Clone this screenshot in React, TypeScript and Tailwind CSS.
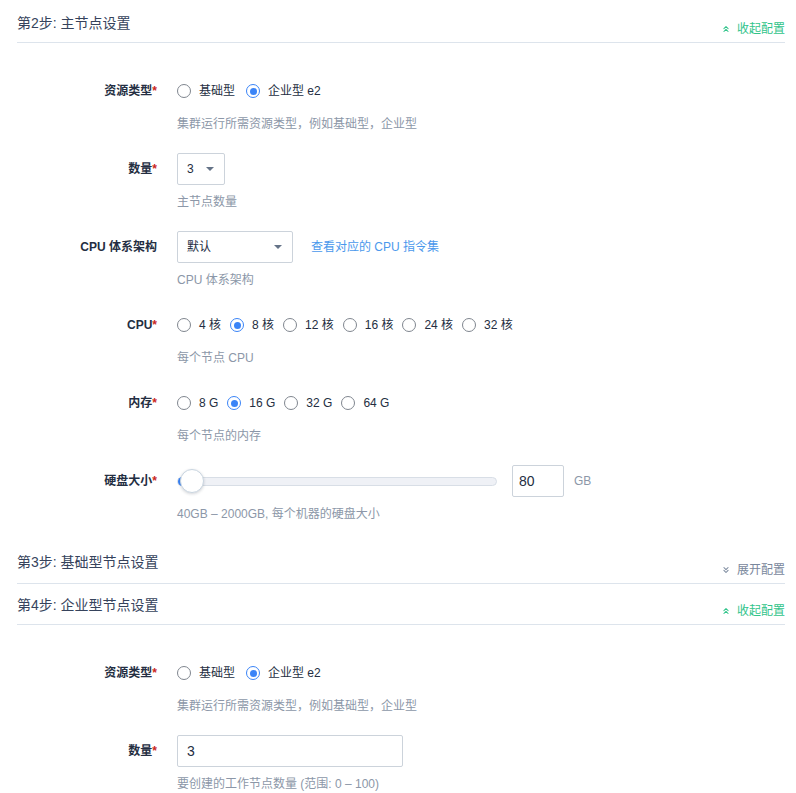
import { ChevronsUp, ChevronsDown } from "lucide-react";

const font = { fontFamily: '"Liberation Sans", "Noto Sans CJK SC", sans-serif' };

function Radio({ label, checked }: { label: string; checked?: boolean }) {
  return (
    <div className="flex items-center gap-2">
      {checked ? (
        <span className="w-[14px] h-[14px] rounded-full border-[1.5px] border-[#3a84f7] flex items-center justify-center">
          <span className="w-[7px] h-[7px] rounded-full bg-[#3a84f7]" />
        </span>
      ) : (
        <span className="w-[14px] h-[14px] rounded-full border border-[#7f868f]" />
      )}
      <span className="text-xs text-[#242e42]">{label}</span>
    </div>
  );
}

function Row({ label, required, hint, last, children }: { label: string; required?: boolean; hint: string; last?: boolean; children: React.ReactNode }) {
  return (
    <div className={`flex ${last ? "mb-[18px]" : "mb-5"}`}>
      <div className="w-[140px] shrink-0 h-8 flex items-center justify-end text-xs font-bold text-[#242e42]">
        {label}
        {required && <span className="text-[#ca2621]">*</span>}
      </div>
      <div className="ml-5 flex flex-col">
        <div className="h-8 flex items-center">{children}</div>
        <div className="mt-2 text-xs leading-[18px] text-[#8c97a8]">{hint}</div>
      </div>
    </div>
  );
}

function Header({ title, open, tall }: { title: string; open: boolean; tall?: boolean }) {
  return (
    <div className={`flex justify-between items-start border-b border-[#dde4ec] ${tall ? "h-[43px]" : "h-[41px]"}`}>
      <div className="pt-[11px] leading-5 text-sm text-[#36435c]">{title}</div>
      <div className={`${tall ? "pt-[21px]" : "pt-[19px]"} leading-4 text-xs flex items-center gap-1.5 ${open ? "text-[#31c48a]" : "text-[#79879c]"}`}>
        {open ? <ChevronsUp size={10} strokeWidth={2.5} /> : <ChevronsDown size={10} strokeWidth={2.5} />}
        {open ? "收起配置" : "展开配置"}
      </div>
    </div>
  );
}

function Select({ value, width }: { value: string; width: string }) {
  return (
    <div className={`h-8 ${width} border border-[#ccd3db] rounded-[2px] flex items-center justify-between pl-[9px] pr-[10px] text-xs text-[#242e42]`}>
      <span>{value}</span>
      <span className="w-0 h-0 border-l-[4px] border-r-[4px] border-t-[4px] border-l-transparent border-r-transparent border-t-[#657387]" />
    </div>
  );
}

function ResourceType() {
  return (
    <Row label="资源类型" required hint="集群运行所需资源类型，例如基础型，企业型">
      <div className="flex items-center gap-[11px]">
        <Radio label="基础型" />
        <Radio label="企业型 e2" checked />
      </div>
    </Row>
  );
}

export default function App() {
  return (
    <div className="bg-white min-h-screen pt-[2px] pl-[17px] pr-[11px]" style={font}>
      <Header title="第2步: 主节点设置" open />
      <div className="pt-8">
        <ResourceType />
        <Row label="数量" required hint="主节点数量">
          <Select value="3" width="w-[48px]" />
        </Row>
        <Row label="CPU 体系架构" hint="CPU 体系架构">
          <Select value="默认" width="w-[116px]" />
          <span className="ml-[18px] text-xs text-[#4a98ec]">查看对应的 CPU 指令集</span>
        </Row>
        <Row label="CPU" required hint="每个节点 CPU">
          <div className="flex items-center gap-[9px]">
            {["4 核", "8 核", "12 核", "16 核", "24 核", "32 核"].map((c) => (
              <Radio key={c} label={c} checked={c === "8 核"} />
            ))}
          </div>
        </Row>
        <Row label="内存" required hint="每个节点的内存">
          <div className="flex items-center gap-[9px]">
            {["8 G", "16 G", "32 G", "64 G"].map((m) => (
              <Radio key={m} label={m} checked={m === "16 G"} />
            ))}
          </div>
        </Row>
        <Row label="硬盘大小" required last hint="40GB – 2000GB, 每个机器的硬盘大小">
          <div className="relative w-[320px] h-[9px] rounded-full bg-[#eff1f6] border border-[#d8dee6]">
            <div className="absolute left-0 top-[-1px] h-[9px] w-[8px] rounded-l-full bg-[#3a84f7]" />
            <div className="absolute left-[2px] top-1/2 -translate-y-1/2 w-6 h-6 rounded-full bg-white border border-[#c9d5e0] shadow-[0_1px_3px_rgba(36,46,66,0.2)]" />
          </div>
          <div className="ml-[15px] h-8 w-[52px] border border-[#ccd3db] rounded-[2px] flex items-center px-[6px] text-sm text-[#242e42]">80</div>
          <span className="ml-[10px] text-xs text-[#8c97a8]">GB</span>
        </Row>
      </div>
      <Header title="第3步: 基础型节点设置" open={false} tall />
      <Header title="第4步: 企业型节点设置" open />
      <div className="pt-8">
        <ResourceType />
        <Row label="数量" required hint="要创建的工作节点数量 (范围: 0 – 100)">
          <div className="h-8 w-[226px] border border-[#ccd3db] rounded-[2px] flex items-center px-[9px] text-sm text-[#242e42]">3</div>
        </Row>
      </div>
    </div>
  );
}
